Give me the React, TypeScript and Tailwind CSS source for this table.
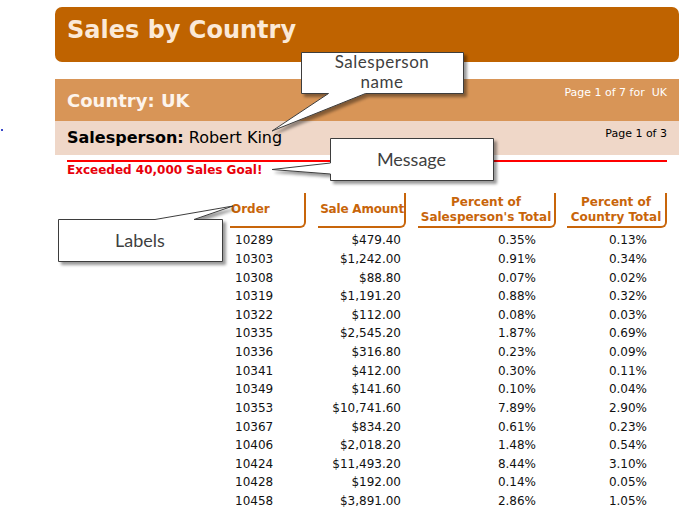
const ROWS: [string, string, string, string][] = [
  ["10289", "$479.40", "0.35%", "0.13%"],
  ["10303", "$1,242.00", "0.91%", "0.34%"],
  ["10308", "$88.80", "0.07%", "0.02%"],
  ["10319", "$1,191.20", "0.88%", "0.32%"],
  ["10322", "$112.00", "0.08%", "0.03%"],
  ["10335", "$2,545.20", "1.87%", "0.69%"],
  ["10336", "$316.80", "0.23%", "0.09%"],
  ["10341", "$412.00", "0.30%", "0.11%"],
  ["10349", "$141.60", "0.10%", "0.04%"],
  ["10353", "$10,741.60", "7.89%", "2.90%"],
  ["10367", "$834.20", "0.61%", "0.23%"],
  ["10406", "$2,018.20", "1.48%", "0.54%"],
  ["10424", "$11,493.20", "8.44%", "3.10%"],
  ["10428", "$192.00", "0.14%", "0.05%"],
  ["10458", "$3,891.00", "2.86%", "1.05%"],
];

const headCell =
  "flex h-[35px] items-center whitespace-nowrap rounded-br-[6px] border-b-2 border-r-2 border-[#c8650a] text-[12px] font-bold leading-[15px] text-[#c8650a]";

function TableHeader() {
  return (
    <div className="flex">
      <div className={`${headCell} w-[76px] pl-px`}>Order</div>
      <div className={`${headCell} ml-[12px] w-[88px] justify-end tracking-[-0.2px]`}>
        Sale Amount
      </div>
      <div className={`${headCell} ml-[12px] w-[138px] justify-center text-center`}>
        Percent of
        <br />
        Salesperson's Total
      </div>
      <div className={`${headCell} ml-[11px] w-[100px] justify-center text-center`}>
        Percent of
        <br />
        Country Total
      </div>
    </div>
  );
}

function Callouts() {
  return (
    <>
      <svg
        className="pointer-events-none absolute left-0 top-0"
        width={688}
        height={512}
        viewBox="0 0 688 512"
      >
        <defs>
          <filter id="callout-shadow" x="-10%" y="-10%" width="130%" height="140%">
            <feDropShadow dx="3" dy="3" stdDeviation="1.6" floodColor="#000" floodOpacity="0.4" />
          </filter>
        </defs>
        <g fill="#fff" stroke="#3d3d3d" strokeWidth={1} filter="url(#callout-shadow)">
          {/* salesperson name */}
          <path d="M301.5 52.5 L463.5 52.5 L463.5 93.5 L365.5 93.5 L272 131 L328.5 93.5 L301.5 93.5 Z" />
          {/* message */}
          <path d="M330.5 138.5 L493.5 138.5 L493.5 180.5 L330.5 180.5 L330.5 174 L272 169.5 L330.5 163 Z" />
          {/* labels */}
          <path d="M58.5 219.5 L155 219.5 L233 206 L194 219.5 L222.5 219.5 L222.5 261.5 L58.5 261.5 Z" />
        </g>
      </svg>
      <div className="absolute left-[301px] top-[52px] flex h-[41px] w-[162px] items-center justify-center pb-[1px] text-center font-['Lato',sans-serif] text-[17px] leading-[20.5px] tracking-[0.5px] text-[#3f3f3f]">
        Salesperson
        <br />
        name
      </div>
      <div className="absolute left-[330px] top-[138px] flex h-[42px] w-[163px] items-center justify-center font-['Lato',sans-serif] text-[18px] text-[#3f3f3f]">
        Message
      </div>
      <div className="absolute left-[58px] top-[219px] flex h-[42px] w-[164px] items-center justify-center font-['Lato',sans-serif] text-[18px] text-[#3f3f3f]">
        Labels
      </div>
    </>
  );
}

export default function App() {
  return (
    <div className="relative h-[512px] w-[688px] overflow-hidden bg-white font-['DejaVu_Sans',sans-serif]">
      <div className="pl-[55px] pr-[9px] pt-[7px]">
        <div className="h-[55px] rounded-[7px] bg-[#bf6300] px-3 pt-[11px]">
          <h1 className="text-[24px] font-bold leading-none text-[#fbe9d7]">
            Sales by Country
          </h1>
        </div>

        <div className="mt-[17px] flex h-[42px] justify-between bg-[#d89557] px-3">
          <h2 className="mt-[13px] text-[18px] font-bold leading-none text-[#fdf4ec]">
            Country: UK
          </h2>
          <span className="mt-[8px] whitespace-pre text-[11px] leading-none text-white">
            Page 1 of 7 for  UK
          </span>
        </div>

        <div className="flex h-[34px] justify-between bg-[#efd7c8] px-3">
          <p className="mt-[9px] text-[16px] leading-none text-black">
            <span className="font-bold">Salesperson:</span> Robert King
          </p>
          <span className="mt-[7px] text-[11px] leading-none text-black">
            Page 1 of 3
          </span>
        </div>

        <div className="mx-3 mt-[5px] border-t-2 border-[#ff0000] pt-[2px]">
          <p className="text-[12px] font-bold leading-none text-[#e8000b]">
            Exceeded 40,000 Sales Goal!
          </p>
        </div>

        <div className="mt-[17px] pl-[175px]">
          <TableHeader />
          <div className="mt-[3px]">
            {ROWS.map(([order, amount, pctSp, pctCountry]) => (
              <div key={order} className="flex h-[18.64px] items-center text-[12px] text-[#111]">
                <div className="w-[76px] pl-[5px]">{order}</div>
                <div className="ml-[12px] w-[88px] pr-[5px] text-right">{amount}</div>
                <div className="ml-[12px] w-[138px] pr-[20px] text-right">{pctSp}</div>
                <div className="ml-[11px] w-[100px] pr-[20px] text-right">{pctCountry}</div>
              </div>
            ))}
          </div>
        </div>
      </div>

      <div className="absolute left-[1px] top-[129px] h-[2px] w-[2px] bg-[#3a48c8]" />
      <Callouts />
    </div>
  );
}
